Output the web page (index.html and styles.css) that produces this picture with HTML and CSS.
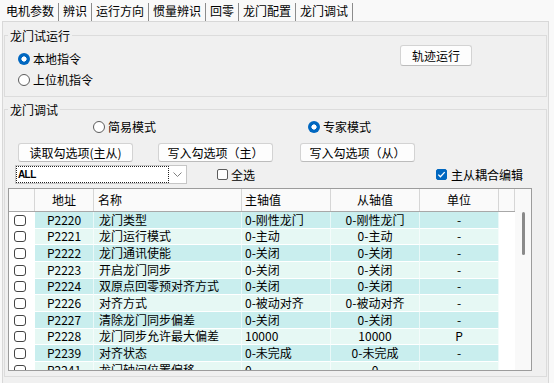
FILE: index.html
```html
<!DOCTYPE html>
<html>
<head>
<meta charset="utf-8">
<link rel="stylesheet" href="styles.css">
</head>
<body>
<div class="tabs">
  <span class="tab">电机参数</span><span class="tab">辨识</span><span class="tab">运行方向</span><span class="tab">惯量辨识</span><span class="tab">回零</span><span class="tab">龙门配置</span><span class="tab active">龙门调试</span>
</div>
<div class="panel">
  <fieldset class="group g1">
    <legend>龙门试运行</legend>
    <div class="g1-body">
      <div class="radios">
        <label class="radio-row"><span class="radio on"></span>本地指令</label>
        <label class="radio-row"><span class="radio"></span>上位机指令</label>
      </div>
      <button class="btn run">轨迹运行</button>
    </div>
  </fieldset>
  <fieldset class="group g2">
    <legend>龙门调试</legend>
    <div class="g2-body">
      <div class="mode-row">
        <label class="opt simple"><span class="radio"></span>简易模式</label>
        <label class="opt expert"><span class="radio on"></span>专家模式</label>
      </div>
      <div class="btn-row">
        <button class="btn wide b1">读取勾选项(主从)</button>
        <button class="btn wide b2">写入勾选项（主）</button>
        <button class="btn wide b3">写入勾选项（从）</button>
      </div>
      <div class="filter-row">
        <div class="combo">
          <span class="combo-text">ALL</span>
          <span class="combo-arrow"><svg width="9" height="5" viewBox="0 0 9 5"><path d="M0.5 0.5l4 4 4-4" fill="none" stroke="#808080"/></svg></span>
        </div>
        <label class="chk-label all"><span class="chk"></span>全选</label>
        <label class="chk-label couple"><span class="chk on"><svg width="9" height="9" viewBox="0 0 9 9"><path d="M1.3 4.6l2.1 2.1 4.3-4.6" fill="none" stroke="#fff" stroke-width="1.3"/></svg></span>主从耦合编辑</label>
      </div>
      <div class="grid">
        <div class="grid-main">
          <div class="row head">
            <span></span><span class="c">地址</span><span class="hl">名称</span><span class="hm">主轴值</span><span class="c">从轴值</span><span class="c">单位</span><span></span>
          </div>
          <div class="row dark"><span class="cb"><i class="box"></i></span><span class="v c">P2220</span><span class="v l">龙门类型</span><span class="v m">0-刚性龙门</span><span class="v c">0-刚性龙门</span><span class="v c">-</span><span class="cb"></span></div>
          <div class="row light"><span class="cb"><i class="box"></i></span><span class="v c">P2221</span><span class="v l">龙门运行模式</span><span class="v m">0-主动</span><span class="v c">0-主动</span><span class="v c">-</span><span class="cb"></span></div>
          <div class="row dark"><span class="cb"><i class="box"></i></span><span class="v c">P2222</span><span class="v l">龙门通讯使能</span><span class="v m">0-关闭</span><span class="v c">0-关闭</span><span class="v c">-</span><span class="cb"></span></div>
          <div class="row light"><span class="cb"><i class="box"></i></span><span class="v c">P2223</span><span class="v l">开启龙门同步</span><span class="v m">0-关闭</span><span class="v c">0-关闭</span><span class="v c">-</span><span class="cb"></span></div>
          <div class="row dark"><span class="cb"><i class="box"></i></span><span class="v c">P2224</span><span class="v l">双原点回零预对齐方式</span><span class="v m">0-关闭</span><span class="v c">0-关闭</span><span class="v c">-</span><span class="cb"></span></div>
          <div class="row light"><span class="cb"><i class="box"></i></span><span class="v c">P2226</span><span class="v l">对齐方式</span><span class="v m">0-被动对齐</span><span class="v c">0-被动对齐</span><span class="v c">-</span><span class="cb"></span></div>
          <div class="row dark"><span class="cb"><i class="box"></i></span><span class="v c">P2227</span><span class="v l">清除龙门同步偏差</span><span class="v m">0-关闭</span><span class="v c">0-关闭</span><span class="v c">-</span><span class="cb"></span></div>
          <div class="row light"><span class="cb"><i class="box"></i></span><span class="v c">P2228</span><span class="v l">龙门同步允许最大偏差</span><span class="v m">10000</span><span class="v c">10000</span><span class="v c">P</span><span class="cb"></span></div>
          <div class="row dark"><span class="cb"><i class="box"></i></span><span class="v c">P2239</span><span class="v l">对齐状态</span><span class="v m">0-未完成</span><span class="v c">0-未完成</span><span class="v c">-</span><span class="cb"></span></div>
          <div class="row light"><span class="cb"><i class="box"></i></span><span class="v c">P2241</span><span class="v l">龙门轴间位置偏移</span><span class="v m">0</span><span class="v c">0</span><span class="v c">-</span><span class="cb"></span></div>
        </div>
        <div class="vscroll"><span class="thumb"></span></div>
      </div>
    </div>
  </fieldset>
</div>
</body>
</html>
```

FILE: styles.css
```css
* { box-sizing: border-box; }
html, body { margin: 0; padding: 0; }
body {
  width: 554px;
  height: 383px;
  overflow: hidden;
  background: #f9f9f9;
  font-family: "Noto Sans CJK SC", "Microsoft YaHei", sans-serif;
  font-size: 12px;
  line-height: 16px;
  color: #000;
}
.tabs {
  display: flex;
  align-items: flex-end;
  height: 21px;
  padding-left: 2px;
}
.tab {
  height: 18px;
  padding: 0 4px;
  border-right: 1px solid #8c8c8c;
  line-height: 16px;
  white-space: nowrap;
}
.panel {
  margin-left: 2px;
  width: 547px;
  height: 362px;
  background: #f0f0f0;
  border: 1px solid #d8d8d8;
  border-bottom: 0;
  padding: 0 1px;
  overflow: hidden;
}
.group {
  margin: 0;
  padding: 0;
  border: 1px solid #dcdcdc;
  min-width: 0;
}
.group legend {
  margin-left: 3px;
  padding: 0 2px;
  line-height: 15px;
}
.g1 { margin-top: 6px; }
.g1-body {
  display: flex;
  align-items: flex-start;
  height: 53px;
  padding: 2px 74px 0 13px;
}
.radios {
  display: flex;
  flex-direction: column;
  margin-top: 3px;
}
.radio-row {
  display: flex;
  align-items: center;
  height: 21px;
}
.opt {
  display: flex;
  align-items: center;
}
.radio {
  flex: none;
  width: 12px;
  height: 12px;
  border-radius: 50%;
  border: 1px solid #5c5c5c;
  background: #fff;
  margin-right: 3px;
}
.radio.on {
  border: none;
  background: radial-gradient(circle, #fff 0 2.3px, #0067c0 2.9px);
}
.btn {
  font: inherit;
  color: #000;
  background: #fdfdfd;
  border: 1px solid #d3d3d3;
  border-bottom-color: #bcbcbc;
  border-radius: 3px;
  padding: 0;
  display: flex;
  align-items: center;
  justify-content: center;
  white-space: nowrap;
}
.run {
  margin-left: auto;
  width: 72px;
  height: 21px;
}
.g2 { margin-top: 5px; }
.g2-body {
  display: flex;
  flex-direction: column;
  height: 259px;
  padding-bottom: 5px;
}
.mode-row {
  display: flex;
  align-items: center;
  height: 20px;
}
.simple { margin-left: 88px; }
.expert { margin-left: 152px; }
.btn-row {
  display: flex;
  margin-top: 6px;
}
.wide { width: 115px; height: 19px; }
.b1 { margin-left: 13px; }
.b2 { margin-left: 25px; }
.b3 { margin-left: 27px; }
.filter-row {
  display: flex;
  align-items: center;
  height: 19px;
  margin-top: 3px;
}
.combo {
  display: flex;
  margin-left: 10px;
  width: 172px;
  height: 19px;
  border: 1px solid #c6c6c6;
  background: #fff;
}
.combo-text {
  flex: none;
  width: 153px;
  border: 1px dotted #222;
  font-family: "Liberation Sans", Arial, sans-serif;
  font-size: 10px;
  font-weight: bold;
  letter-spacing: -0.6px;
  line-height: 15px;
  padding-left: 1px;
}
.combo-arrow {
  flex: 1;
  display: flex;
  align-items: center;
  justify-content: center;
}
.chk-label {
  display: flex;
  align-items: center;
}
.chk {
  flex: none;
  display: flex;
  align-items: center;
  justify-content: center;
  width: 11px;
  height: 11px;
  border: 1px solid #5c5c5c;
  border-radius: 2px;
  background: #fff;
  margin-right: 3px;
}
.chk.on {
  background: #0067c0;
  border-color: #0067c0;
  margin-right: 4px;
}
.all { margin-left: 30px; }
.couple { margin-left: 181px; }
.grid {
  display: flex;
  margin: 4px 0 0 3px;
  width: 524px;
  height: 183px;
  border: 1px solid #9c9c9c;
  background: #fff;
  overflow: hidden;
}
.grid-main { width: 506px; flex: none; }
.row {
  display: grid;
  grid-template-columns: 26px 59px 148px 89px 89px 79px 16px;
  height: 16.67px;
}
.row > span {
  display: flex;
  align-items: center;
  white-space: nowrap;
  overflow: hidden;
}
.head {
  height: 23px;
  background: #fafafa;
  border-bottom: 1px solid #a8a8a8;
}
.head > span { border-right: 1px solid #d6d6d6; }
.c { justify-content: center; }
.l { padding-left: 5px; }
.m { padding-left: 3px; }
.hl { padding-left: 4px; }
.hm { padding-left: 3px; }
.cb { background: #fff; }
.v {
  border-bottom: 1px solid #fff;
  border-right: 1px solid rgba(255, 255, 255, 0.6);
}
.dark > .v { background: #c9eeee; }
.light > .v { background: #e6f8f4; }
.box {
  width: 12px;
  height: 11px;
  margin-left: 5px;
  border: 1px solid #444;
  border-radius: 3px;
  background: #fff;
}
.vscroll {
  position: relative;
  width: 16px;
  flex: none;
  background: #f9f9f9;
}
.thumb {
  position: absolute;
  left: 7px;
  top: 23px;
  width: 3px;
  height: 43px;
  border-radius: 2px;
  background: #8a8a8a;
}
```
